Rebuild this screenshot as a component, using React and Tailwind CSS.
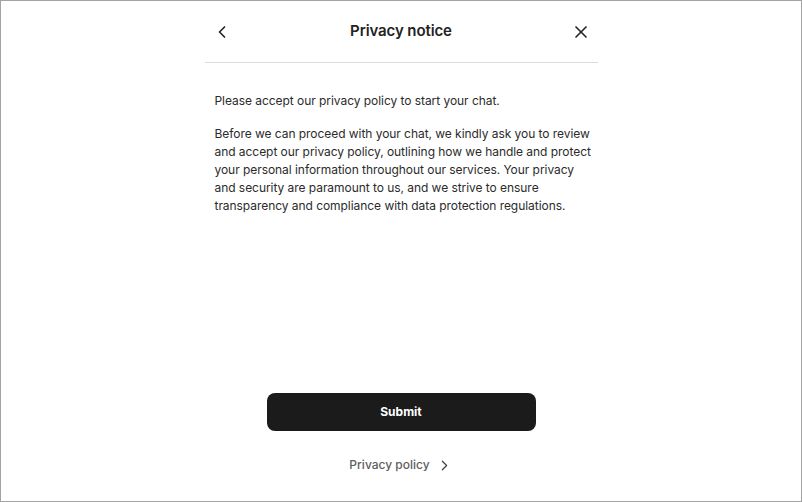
import React from "react";
import { ChevronLeft, ChevronRight, X } from "lucide-react";

const App = () => {
  return (
    <div
      className="h-[502px] w-full border border-[#a3a3a3] bg-white text-[#222222] flex justify-center"
      style={{ fontFamily: "Inter, 'Noto Sans', sans-serif" }}
    >
      <div className="w-[393px] h-full flex flex-col">
        {/* header */}
        <div className="h-[62px] shrink-0 border-b border-[#dddddd] flex items-center justify-between px-[3px]">
          <button className="w-[28px] h-[28px] flex items-center justify-center text-[#222]">
            <ChevronLeft size={20} strokeWidth={2} />
          </button>
          <h1 className="text-[15px] font-semibold tracking-[-0.1px]">Privacy notice</h1>
          <button className="w-[28px] h-[28px] flex items-center justify-center text-[#222]">
            <X size={20} strokeWidth={2} />
          </button>
        </div>

        {/* body */}
        <div className="flex-1 pl-[10px] pr-0 pt-[29px] text-[12px] leading-[18px] text-[#2b2b2b] tracking-[-0.05px]">
          <p>Please accept our privacy policy to start your chat.</p>
          <p className="mt-[15px]">
            Before we can proceed with your chat, we kindly ask you to review and accept our
            privacy policy, outlining how we handle and protect your personal information
            throughout our services. Your privacy and security are paramount to us, and we
            strive to ensure transparency and compliance with data protection regulations.
          </p>
        </div>

        {/* footer */}
        <div className="flex flex-col items-center pb-[27px]">
          <button className="w-[269px] h-[38px] rounded-[8px] bg-[#1b1b1b] text-white text-[12px] font-bold">
            Submit
          </button>
          <a className="mt-[25px] h-[18px] flex items-center gap-[6px] text-[12px] text-[#5e5e5e] font-medium">
            Privacy policy
            <ChevronRight size={17} strokeWidth={1.75} className="text-[#444]" />
          </a>
        </div>
      </div>
    </div>
  );
};

export default App;
